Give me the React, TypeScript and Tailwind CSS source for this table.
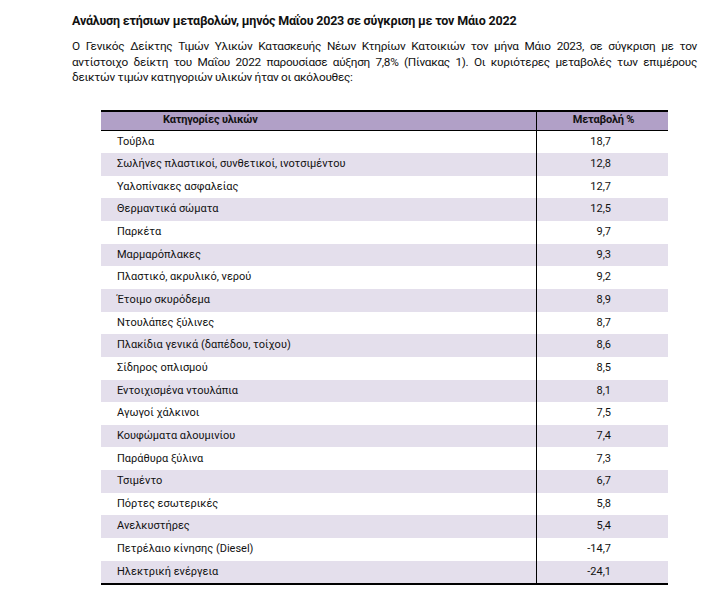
const rows: [string, string][] = [
  ["Τούβλα", "18,7"],
  ["Σωλήνες πλαστικοί, συνθετικοί, ινοτσιμέντου", "12,8"],
  ["Υαλοπίνακες ασφαλείας", "12,7"],
  ["Θερμαντικά σώματα", "12,5"],
  ["Παρκέτα", "9,7"],
  ["Μαρμαρόπλακες", "9,3"],
  ["Πλαστικό, ακρυλικό, νερού", "9,2"],
  ["Έτοιμο σκυρόδεμα", "8,9"],
  ["Ντουλάπες ξύλινες", "8,7"],
  ["Πλακίδια γενικά (δαπέδου, τοίχου)", "8,6"],
  ["Σίδηρος οπλισμού", "8,5"],
  ["Εντοιχισμένα ντουλάπια", "8,1"],
  ["Αγωγοί χάλκινοι", "7,5"],
  ["Κουφώματα αλουμινίου", "7,4"],
  ["Παράθυρα ξύλινα", "7,3"],
  ["Τσιμέντο", "6,7"],
  ["Πόρτες εσωτερικές", "5,8"],
  ["Ανελκυστήρες", "5,4"],
  ["Πετρέλαιο κίνησης (Diesel)", "-14,7"],
  ["Ηλεκτρική ενέργεια", "-24,1"],
];

const App = () => {
  return (
    <div className="w-[705px] h-[599px] bg-white text-[#111] font-['Roboto','Noto_Sans',sans-serif] overflow-hidden">
      <div className="pl-[72px] pr-[8px] pt-[12px]">
        <h1 className="text-[12.5px] font-bold leading-[18px] tracking-[-0.2px]">
          Ανάλυση ετήσιων μεταβολών, μηνός Μαΐου 2023 σε σύγκριση με τον Μάιο 2022
        </h1>
        <div className="mt-[9px] text-[11.8px] leading-[15.5px] text-justify tracking-[-0.3px]">
          <p className="[text-align-last:justify]">
            Ο Γενικός Δείκτης Τιμών Υλικών Κατασκευής Νέων Κτηρίων Κατοικιών τον μήνα Μάιο 2023, σε σύγκριση με τον
          </p>
          <p className="[text-align-last:justify]">
            αντίστοιχο δείκτη του Μαΐου 2022 παρουσίασε αύξηση 7,8% (Πίνακας 1). Οι κυριότερες μεταβολές των επιμέρους
          </p>
          <p>δεικτών τιμών κατηγοριών υλικών ήταν οι ακόλουθες:</p>
        </div>
      </div>

      <div className="ml-[101px] mt-[24px] w-[567px] text-[11px]">
        <div className="flex h-[21px] items-center bg-[#b1a0c7] border-t-2 border-b border-black font-bold">
          <div className="w-[436px] h-full flex items-center pl-[62px] border-r border-black tracking-[-0.2px]">
            Κατηγορίες υλικών
          </div>
          <div className="flex-1 text-center pl-[2px] tracking-[-0.2px]">Μεταβολή %</div>
        </div>
        {rows.map(([name, value], i) => (
          <div
            key={name}
            className={`flex h-[22.65px] items-center ${i % 2 === 1 ? "bg-[#e4dfec]" : "bg-white"}`}
          >
            <div className="w-[436px] h-full flex items-center pl-[16px] border-r border-black">
              {name}
            </div>
            <div className="flex-1 text-right pr-[57px]">{value}</div>
          </div>
        ))}
        <div className="border-t-2 border-black" />
      </div>
    </div>
  );
};

export default App;
